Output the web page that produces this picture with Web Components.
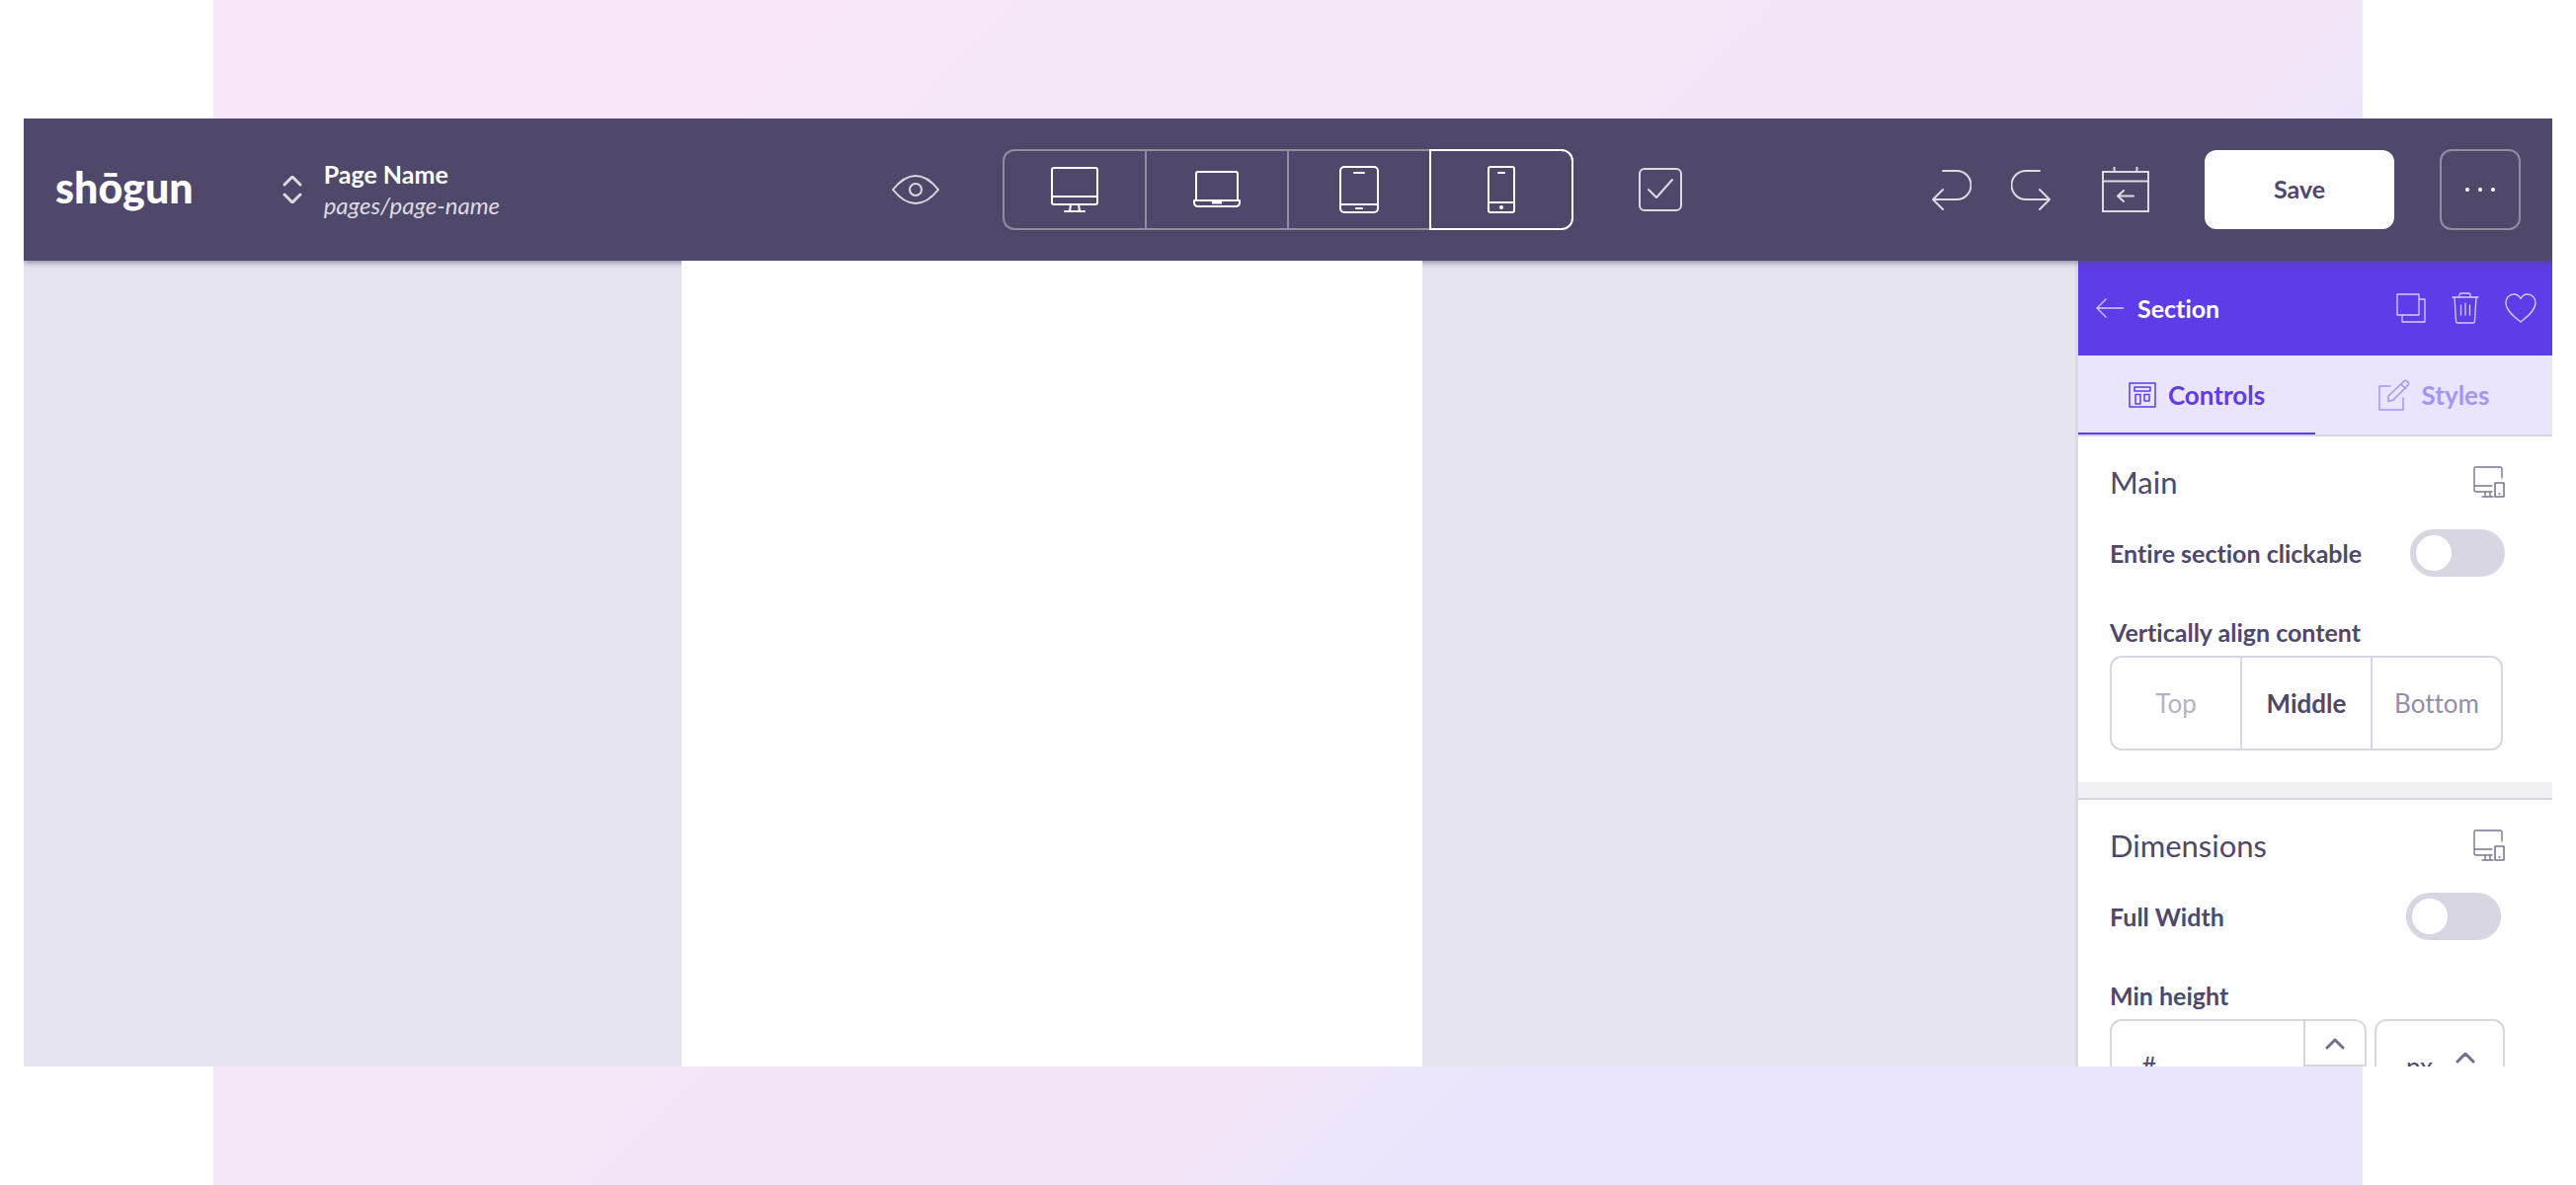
<!DOCTYPE html>
<html lang="en">
<head>
<meta charset="utf-8">
<title>Shogun page editor</title>
<style>
  html, body { height: 100%; margin: 0; background: #fff; }
  body { font-family: Lato, "Liberation Sans", sans-serif; font-size: 26px; line-height: 32px; color: #4f486b; font-variant-ligatures: none; }
</style>
</head>
<body>
<editor-app></editor-app>

<script>
const BASE = `
  :host, *, *::before, *::after { box-sizing: border-box; }
  button, input, select { font: inherit; font-variant-ligatures: inherit; color: inherit; background: none; border: 0; margin: 0; padding: 0; appearance: none; outline: none; }
  svg { display: block; fill: none; stroke: currentColor; stroke-width: 2; stroke-linecap: round; stroke-linejoin: round; flex: none; }
`;
const define = (name, html, init) => {
  const template = document.createElement('template');
  template.innerHTML = html;
  customElements.define(name, class extends HTMLElement {
    constructor() {
      super();
      this.attachShadow({ mode: 'open' }).append(template.content.cloneNode(true));
      const base = document.createElement('style');
      base.textContent = BASE;
      this.shadowRoot.prepend(base);
    }
    connectedCallback() { if (init) init(this, this.shadowRoot); }
  });
};

const ICONS = {
  updown: [20, 28, '<path stroke-width="3" d="M2 9l8-8 8 8M2 19l8 8 8-8"/>'],
  up: [20, 12, '<path stroke-width="3" d="M2 10l8-8 8 8"/>'],
  eye: [48, 30, '<path d="M1 15C9 5 16 1 24 1s15 4 23 14c-8 10-15 14-23 14S9 25 1 15z"/><circle cx="24" cy="15" r="6"/>'],
  desktop: [48, 46, '<rect x="1" y="1" width="46" height="37" rx="2"/><path d="M1 30h46M20 38l-1 7M28 38l1 7M14 45h20"/>'],
  laptop: [48, 38, '<path d="M3 30V3q0-2 2-2h38q2 0 2 2v27"/><path d="M1 30h46v2q0 4-4 4H5q-4 0-4-4z"/><path stroke-width="3" stroke-linecap="butt" d="M19 32h10"/>'],
  tablet: [40, 48, '<rect x="1" y="1" width="38" height="46" rx="4"/><path d="M15 7h10M1 39h38M17 43h6"/>'],
  phone: [28, 48, '<rect x="1" y="1" width="26" height="46" rx="2"/><path d="M11 7h6M1 37h26"/><circle cx="14" cy="42" r="1" />'],
  check: [44, 44, '<rect x="1" y="1" width="42" height="42" rx="5"/><path d="M10 22l8 8 16-18"/>'],
  undo: [40, 42, '<path d="M11 2h14a14 14 0 0 1 0 29H1M11 21L1 31l10 10"/>'],
  redo: [40, 42, '<path d="M29 2H15a14 14 0 0 0 0 29h24M29 21l10 10-10 10"/>'],
  calendar: [48, 46, '<path stroke-linejoin="miter" d="M1 5h46v40H1zM1 14.500h46M12.500 0v5M35.500 0v5M32 29.500H16M22 24l-6 5.500 6 5.500"/>'],
  dots: [30, 6, '<g fill="currentColor" stroke="none"><circle cx="2" cy="3" r="2"/><circle cx="15" cy="3" r="2"/><circle cx="28" cy="3" r="2"/></g>'],
  back: [28, 20, '<path stroke-width="1.300" d="M28 10H1M10 1l-9 9 9 9"/>'],
  copy: [30, 30, '<path stroke-width="1.300" d="M1 1h22v21H1zM23 6h6v23H6v-7"/>'],
  trash: [28, 32, '<path stroke-width="1.300" d="M1 5h26M8 5V3q0-2 2-2h7q2 0 2 2v2M3 5l1.500 24q0 2 2 2h15q2 0 2-2L25 5M9.500 13v10M14 11v12M18.500 13v10"/>'],
  heart: [32, 30, '<path stroke-width="1.300" d="M16 29C11 25 1 18 1 9.500 1 5 4.500 1 9 1c3 0 5.500 1.500 7 4.500C17.500 2.500 20 1 23 1c4.500 0 8 4 8 8.500C31 18 21 25 16 29z"/>'],
  layout: [28, 26, '<path stroke-width="1.500" d="M1 1h26v24H1zM6 5h16v4H6zM7 12.500h5V22H7zM16 12.500h5V19h-5z"/>'],
  pencil: [32, 32, '<path stroke-width="1.500" d="M12 7H1v24h24V19M10 17L26 2q1.500-1.500 3 0 2.500 2.500 1 4L15 21l-5 1.500zM23 5l4.500 4.500"/>'],
  devices: [32, 32, '<path stroke-width="1.400" d="M29 12V3q0-2-2-2H3Q1 1 1 3v21q0 2 2 2h16M1 20h18M12 26v5M17 26v5M9 31h11"/><rect stroke-width="1.600" x="22" y="17" width="9" height="14"/><path stroke-width="1.400" d="M26 28h1"/>'],
};
define('ui-icon', `<style>:host{display:block;flex:none}</style>`, (el, root) => {
  const icon = ICONS[el.getAttribute('name')];
  if (!icon || root.querySelector('svg')) return;
  const [w, h, body] = icon;
  root.innerHTML += `<svg width="${w}" height="${h}" viewBox="0 0 ${w} ${h}" aria-hidden="true">${body}</svg>`;
});

define('icon-button', `
  <style>
    :host { display: block; color: #dcdbe2; }
    button { display: grid; place-items: center; cursor: pointer; }
    :host([box]) button { width: 82px; height: 82px; border: 2px solid #918da3; border-radius: 12px; color: #fff; }
    :host([wide]) button { width: 48px; }
  </style>
  <button type="button"></button>`, (el, root) => {
  const button = root.querySelector('button');
  const icon = document.createElement('ui-icon');
  icon.setAttribute('name', el.getAttribute('icon'));
  button.replaceChildren(icon);
  button.setAttribute('aria-label', el.getAttribute('label'));
});

define('device-switch', `
  <style>
    :host { display: flex; color: #fff; }
    button { width: 146px; height: 82px; border: 2px solid #918da3; display: grid; place-items: center; }
    button:first-of-type { border-radius: 12px 0 0 12px; }
    button + button { margin-left: -2px; }
    button:last-of-type { border-radius: 0 12px 12px 0; }
    button[aria-pressed=true] { border-color: #fff; z-index: 1; }
  </style>
  <button type="button" aria-label="Desktop" aria-pressed="false"><ui-icon name="desktop"></ui-icon></button>
  <button type="button" aria-label="Laptop" aria-pressed="false"><ui-icon name="laptop"></ui-icon></button>
  <button type="button" aria-label="Tablet" aria-pressed="false"><ui-icon name="tablet"></ui-icon></button>
  <button type="button" aria-label="Phone" aria-pressed="true"><ui-icon name="phone"></ui-icon></button>`);

define('page-picker', `
  <style>
    :host { display: block; font-size: 25px; }
    button { display: flex; align-items: center; gap: 22px; text-align: left; color: #dcdbe2; }
    strong { display: block; color: #fff; font-weight: 700; }
    em { display: block; font-size: 24px; }
  </style>
  <button type="button"><ui-icon name="updown"></ui-icon><span><strong><slot></slot></strong><em><slot name="path"></slot></em></span></button>`);

define('top-bar', `
  <style>
    :host { display: grid; grid-template-columns: 1fr auto 1fr; align-items: center; height: 144px; padding: 0 32px;
      background: #4f486b; box-shadow: 0 2px 6px rgba(79,72,107,.6); }
    .left { display: flex; align-items: center; gap: 90px; }
    .logo { color: #fff; font-size: 43px; line-height: 48px; padding-bottom: 4px; font-weight: 900; text-decoration: none; }
    .mid { display: flex; align-items: center; gap: 64px; }
    .right { display: flex; align-items: center; justify-content: flex-end; gap: 46px; }
    .history { display: flex; align-items: center; gap: 40px; }
    .icons { display: flex; align-items: center; gap: 52px; }
    .save { width: 192px; height: 80px; padding-bottom: 2px; border-radius: 12px; background: #fff; color: #4f486b; font-size: 25px; font-weight: 700; }
    .tools { display: flex; align-items: center; gap: 56px; }
  </style>
  <div class="left"><a class="logo" href="#">shōgun</a><page-picker>Page Name<span slot="path">pages/page-name</span></page-picker></div>
  <div class="mid">
    <icon-button icon="eye" label="Preview"></icon-button>
    <device-switch></device-switch>
    <icon-button wide icon="check" label="Select"></icon-button>
  </div>
  <div class="right">
    <div class="tools">
      <div class="icons">
        <div class="history">
          <icon-button icon="undo" label="Undo"></icon-button>
          <icon-button icon="redo" label="Redo"></icon-button>
        </div>
        <icon-button icon="calendar" label="Revisions"></icon-button>
      </div>
      <button class="save" type="button">Save</button>
    </div>
    <icon-button box icon="dots" label="More"></icon-button>
  </div>`);

define('page-canvas', `
  <style>
    :host { display: flex; justify-content: center; padding-left: 2px; }
    main { width: 750px; background: #fff; }
  </style>
  <main></main>`);

define('panel-header', `
  <style>
    :host { display: flex; align-items: center; height: 96px; padding: 0 16px 0 18px; background: #5e3ce7; color: #fff; }
    h2 { flex: 1; margin: 0 0 0 14px; font-size: 25px; line-height: 32px; font-weight: 700; }
    nav { display: flex; align-items: center; gap: 26px; }
    icon-button { color: #d5cdf8; }
  </style>
  <icon-button icon="back" label="Back"></icon-button><h2><slot></slot></h2>
  <nav><icon-button icon="copy" label="Duplicate"></icon-button><icon-button icon="trash" label="Delete"></icon-button><icon-button icon="heart" label="Favourite"></icon-button></nav>`);

define('panel-tabs', `
  <style>
    :host { display: grid; grid-template-columns: 1fr 1fr; height: 82px; background: #eae5fc; border-bottom: 2px solid #d8d6e2; font-weight: 700; }
    button { display: flex; align-items: center; justify-content: center; gap: 12px; padding-top: 2px; color: #a595f2; border-bottom: 2px solid transparent; }
    button[aria-selected=true] { color: #5e3ce7; border-color: #5e3ce7; }
  </style>
  <button role="tab" aria-selected="true" type="button"><ui-icon name="layout"></ui-icon>Controls</button>
  <button role="tab" aria-selected="false" type="button"><ui-icon name="pencil"></ui-icon>Styles</button>`);

define('panel-section', `
  <style>
    :host { display: block; padding: 26px 48px 32px 32px; }
    :host(:not(:first-of-type)) { border-top: 2px solid #d8d6e2; }
    header { display: flex; justify-content: space-between; align-items: center; height: 40px; margin-bottom: 28px; }
    h3 { margin: 0; font-size: 31px; line-height: 40px; font-weight: 400; }
    ui-icon { color: #7a7591; }
  </style>
  <header><h3><slot name="title"></slot></h3><ui-icon name="devices"></ui-icon></header>
  <slot></slot>`);

define('toggle-row', `
  <style>
    :host { display: block; margin-bottom: 40px; font-size: 25px; }
    label { display: flex; justify-content: space-between; align-items: center; font-weight: 700; }
    input { width: 96px; height: 48px; padding: 6px; border-radius: 24px; background: #d8d6e2; display: flex; }
    input::before { content: ""; width: 36px; height: 36px; border-radius: 50%; background: #fff; }
    input:checked { background: #5e3ce7; justify-content: flex-end; }
    :host([inset]) label { padding-right: 4px; }
  </style>
  <label><span><slot></slot></span><input type="checkbox" role="switch"></label>`);

define('align-picker', `
  <style>
    :host { display: block; }
    fieldset { margin: 0; padding: 0; border: 0; }
    legend { padding: 0; margin-bottom: 8px; font-size: 25px; font-weight: 700; }
    div { display: flex; padding-right: 2px; }
    label { flex: 1; height: 96px; display: grid; place-items: center; border: 2px solid #d8d6e2; color: #928ea5; }
    label + label { margin-left: -2px; }
    label:first-child { border-radius: 12px 0 0 12px; color: #b5b2c3; }
    label:last-child { border-radius: 0 12px 12px 0; }
    label:has(:checked) { color: #4f486b; font-weight: 700; }
    input, span { grid-area: 1 / 1; }
    input { width: 100%; height: 100%; }
  </style>
  <fieldset><legend>Vertically align content</legend>
    <div>
      <label><input type="radio" name="align"><span>Top</span></label>
      <label><input type="radio" name="align" checked><span>Middle</span></label>
      <label><input type="radio" name="align"><span>Bottom</span></label>
    </div>
  </fieldset>`);

define('size-field', `
  <style>
    :host { display: block; }
    .label { display: block; margin-bottom: 8px; font-size: 25px; font-weight: 700; }
    .row { display: grid; grid-template-columns: 1fr 132px; gap: 8px; }
    .number, .unit { height: 96px; border: 2px solid #d8d6e2; border-radius: 12px; overflow: hidden; display: grid; }
    .number { grid-template-columns: 1fr 62px; }
    .number input { width: 100%; padding-left: 30px; }
    input::placeholder { color: #4f486b; opacity: 1; }
    .step { display: grid; grid-template-rows: 46px 1fr; border-left: 2px solid #d6d5d9; color: #736e8c; }
    .step button { display: grid; place-items: center; }
    .step button:first-child { border-bottom: 2px solid #d6d5d9; padding-top: 2px; }
    .step button + button ui-icon { rotate: 180deg; }
    select, .unit ui-icon { grid-area: 1 / 1; }
    select { width: 100%; height: 100%; padding-left: 30px; }
    .unit ui-icon { place-self: center end; margin-right: 28px; color: #736e8c; pointer-events: none; }
  </style>
  <label class="label" for="size">Min height</label>
  <div class="row">
    <div class="number">
      <input id="size" type="text" inputmode="numeric" placeholder="#">
      <div class="step"><button type="button" aria-label="Increase"><ui-icon name="up"></ui-icon></button><button type="button" aria-label="Decrease"><ui-icon name="up"></ui-icon></button></div>
    </div>
    <div class="unit"><select aria-label="Unit"><option>px</option><option>%</option></select><ui-icon name="updown"></ui-icon></div>
  </div>`);

define('side-panel', `
  <style>
    :host { display: block; background: #fff; box-shadow: -3px 0 0 #dcdae6; }
    .gap { height: 16px; background: #f1f0f5; }
  </style>
  <panel-header>Section</panel-header>
  <panel-tabs role="tablist"></panel-tabs>
  <panel-section><span slot="title">Main</span>
    <toggle-row>Entire section clickable</toggle-row>
    <align-picker></align-picker>
  </panel-section>
  <div class="gap"></div>
  <panel-section><span slot="title">Dimensions</span>
    <toggle-row inset>Full Width</toggle-row>
    <size-field></size-field>
  </panel-section>`);

define('editor-app', `
  <style>
    :host { display: flex; height: 100%; padding: 120px 24px;
      background: linear-gradient(135deg, #f9e7f8 18%, #f4e7f8 30%, #f3e6f8 63%, #eae5fc 71%) center / calc(100% - 432px) 100% no-repeat; }
    .window { flex: 1; min-width: 0; display: grid; grid-template-rows: auto minmax(0, 1fr); overflow: hidden; }
    top-bar { position: relative; z-index: 1; }
    .work { display: grid; grid-template-columns: 1fr 480px; grid-template-rows: minmax(0, 1fr); background: #e6e5ef; }
    page-canvas { position: relative; z-index: 2; }
  </style>
  <div class="window">
    <top-bar></top-bar>
    <div class="work"><page-canvas></page-canvas><side-panel></side-panel></div>
  </div>`);
</script>
</body>
</html>
